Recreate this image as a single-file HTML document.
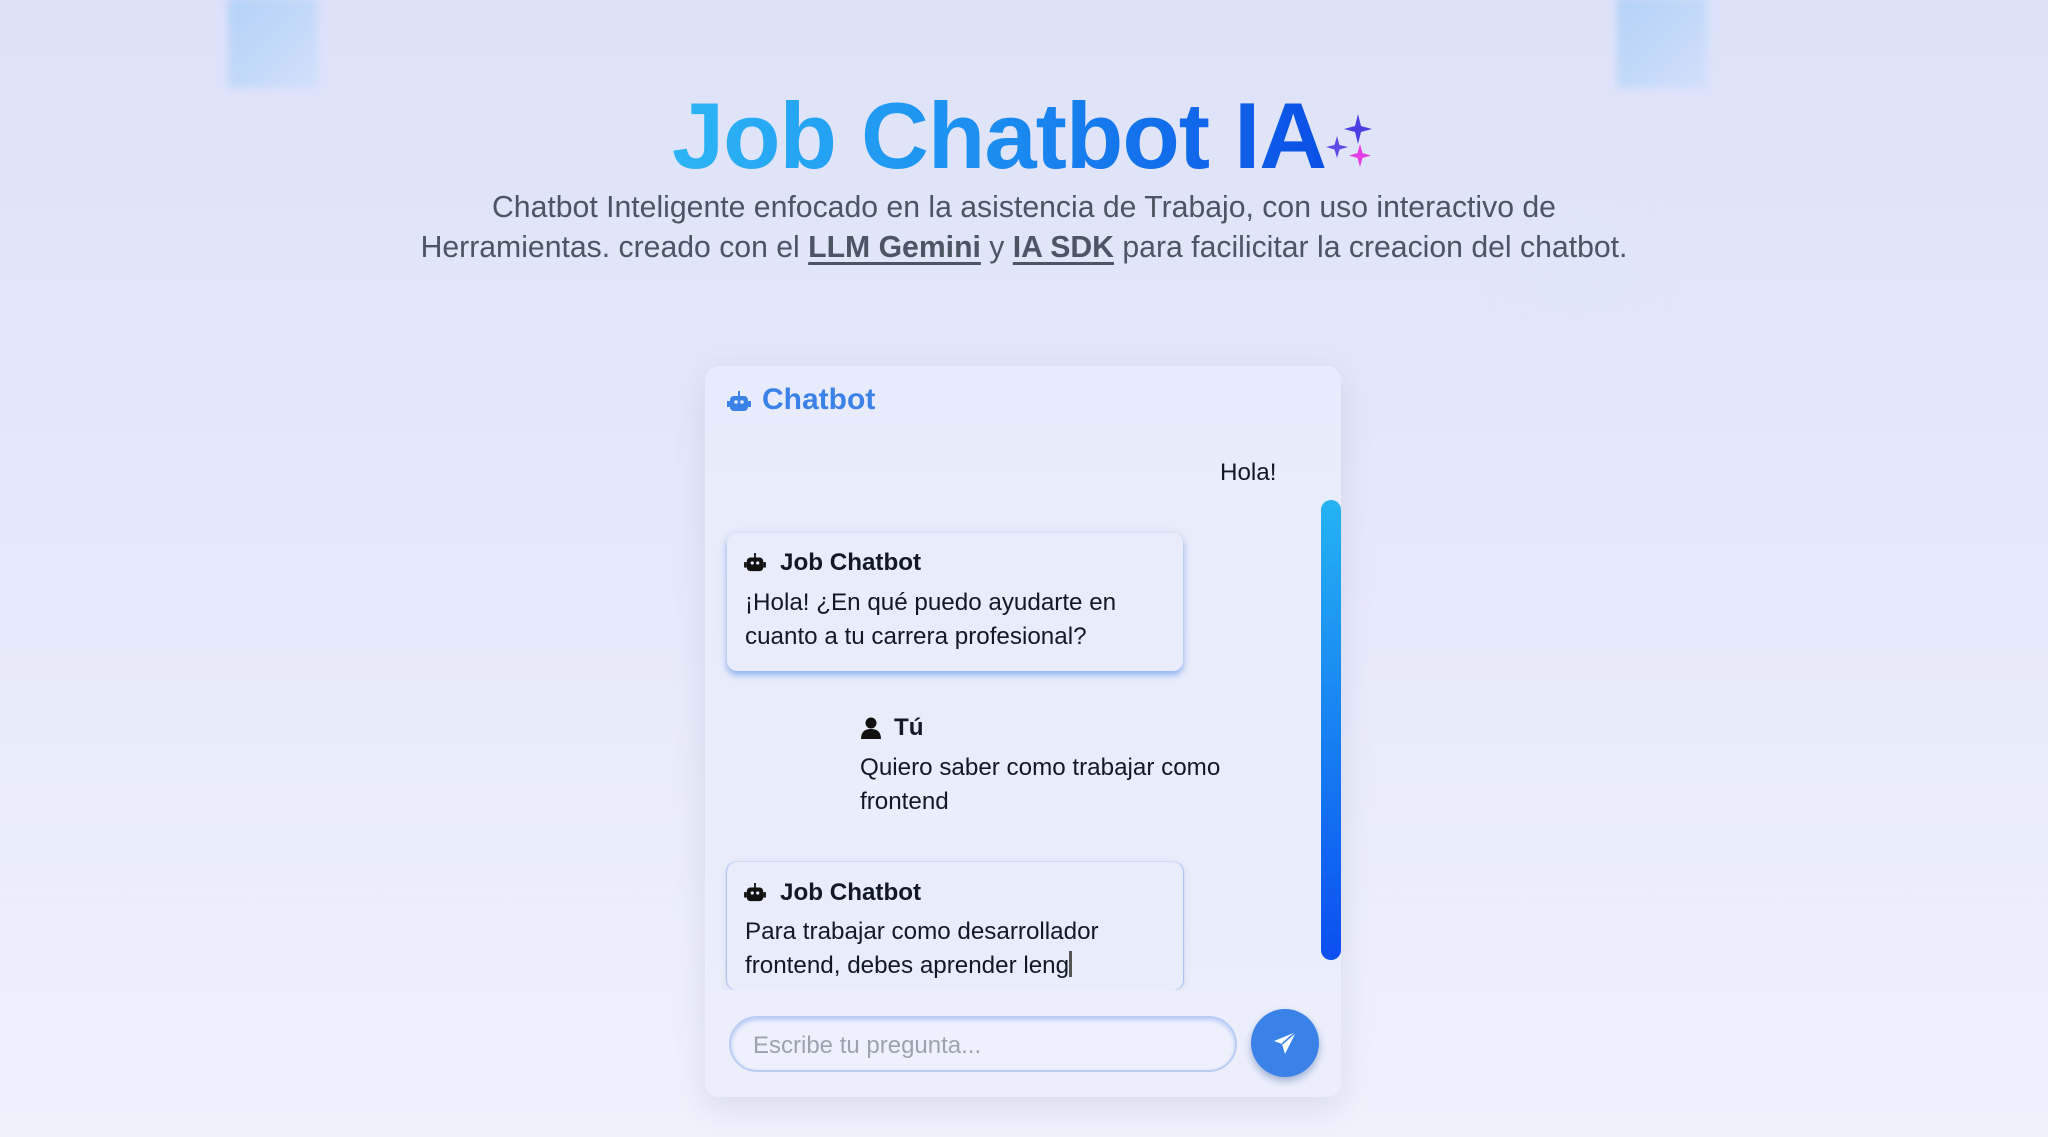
<!DOCTYPE html>
<html><head><meta charset="utf-8"><style>
*{margin:0;padding:0;box-sizing:border-box}
html,body{width:2048px;height:1137px;overflow:hidden}
body{font-family:"Liberation Sans",sans-serif;background:linear-gradient(180deg,#dde2f9 0%,#e6e9fa 50%,#eff1fb 100%);position:relative;color:#111827}
.sq{position:absolute;width:90px;height:90px;top:-2px;background:linear-gradient(135deg,#a9cdf7,#cfe0fb);filter:blur(4px);opacity:.8}
.blob{position:absolute;left:1520px;top:200px;width:120px;height:110px;border-radius:50%;background:#dfe5fa;filter:blur(20px);opacity:.7}
h1{position:absolute;left:0;width:2048px;top:82px;text-align:center;font-size:94px;font-weight:700;letter-spacing:-1px;line-height:1.15}
h1 span{background:linear-gradient(90deg,#2cb5f5 0%,#1a8cf0 50%,#0a4fe6 100%);-webkit-background-clip:text;background-clip:text;color:transparent}
.sub{position:absolute;left:0;width:2048px;top:188px;text-align:center;font-size:30.2px;line-height:40px;color:#4b5563}
.sub b{text-decoration:underline;text-underline-offset:5px}
.card{position:absolute;left:705px;top:366px;width:636px;height:731px;border-radius:14px;background:rgba(234,238,252,.6);box-shadow:0 10px 30px rgba(120,130,170,.18)}
.t{position:absolute;font-size:24.2px;line-height:34px;color:#111827}
.bub{position:absolute;left:727px;width:456px;background:#e8ecfb;border-radius:10px;box-shadow:0 4px 6px rgba(59,130,246,.45),0 2px 10px rgba(100,110,150,.15)}
.name{font-weight:700}
.sb{position:absolute;left:1321px;top:500px;width:20px;height:460px;border-radius:10px;background:linear-gradient(180deg,#24b3f3,#0b4ff0)}
.inp{position:absolute;left:729px;top:1016px;width:508px;height:56px;border-radius:28px;border:2px solid #b9cdf4;background:#eef1fc;box-shadow:inset 0 2px 4px rgba(80,130,240,.35);font-size:24px;color:#9ca3af;padding:14px 22px}
.btn{position:absolute;left:1251px;top:1009px;width:68px;height:68px;border-radius:50%;background:#3b82e8;box-shadow:0 4px 8px rgba(40,80,160,.4)}
</style></head><body>
<div class="sq" style="left:228px"></div><div class="sq" style="left:1617px"></div>
<div class="blob"></div>
<h1><span>Job Chatbot IA</span><svg width="52" height="60" viewBox="0 0 52 60" style="vertical-align:-4px;margin-left:-2px"><path d="M34 2 L37 14 L48 17 L37 20 L34 32 L31 20 L20 17 L31 14Z" fill="#4a3fe0"/><path d="M13 24 L15.5 33 L24 35 L15.5 37.5 L13 46 L10.5 37.5 L2 35 L10.5 33Z" fill="#5b4ae6"/><path d="M36 32 L38.5 41 L47 43.5 L38.5 46 L36 55 L33.5 46 L25 43.5 L33.5 41Z" fill="#e43fe6"/></svg></h1>
<div class="sub">Chatbot Inteligente enfocado en la asistencia de Trabajo, con uso interactivo de<br>Herramientas. creado con el <b>LLM Gemini</b> y <b>IA SDK</b> para facilicitar la creacion del chatbot.</div>
<div class="card"></div>
<svg style="position:absolute;left:727px;top:391px" width="24" height="22" viewBox="0 0 24 22"><rect x="3" y="5" width="18" height="15" rx="4" fill="#3b82e8"/><rect x="11" y="0" width="2" height="5" fill="#3b82e8"/><rect x="0" y="10" width="3" height="6" fill="#3b82e8"/><rect x="21" y="10" width="3" height="6" fill="#3b82e8"/><circle cx="9" cy="11" r="1.8" fill="#e6ebfb"/><circle cx="15" cy="11" r="1.8" fill="#e6ebfb"/></svg>
<div class="t" style="left:762px;top:383px;font-size:30px;font-weight:700;color:#3b82e8">Chatbot</div>
<div class="t" style="left:1220px;top:456px">Hola!</div>
<div class="sb"></div>
<div class="bub" style="top:533px;height:138px"></div>
<div class="bub" style="top:862px;height:128px;box-shadow:0 2px 10px rgba(100,110,150,.15),-1px 0 1px rgba(59,130,246,.4),1px 0 1px rgba(59,130,246,.4)"></div>
<div style="position:absolute;left:705px;top:990px;width:636px;height:107px;background:#eceffb;border-radius:0 0 14px 14px"></div>
<svg style="position:absolute;left:744px;top:553px" width="22" height="20" viewBox="0 0 24 22"><rect x="3" y="5" width="18" height="15" rx="4" fill="#111"/><rect x="11" y="0" width="2" height="5" fill="#111"/><rect x="0" y="10" width="3" height="6" fill="#111"/><rect x="21" y="10" width="3" height="6" fill="#111"/><circle cx="9" cy="11" r="1.8" fill="#e6ebfb"/><circle cx="15" cy="11" r="1.8" fill="#e6ebfb"/></svg>
<div class="t name" style="left:780px;top:546px">Job Chatbot</div>
<div class="t" style="left:745px;top:586px">¡Hola! ¿En qué puedo ayudarte en<br>cuanto a tu carrera profesional?</div>
<svg style="position:absolute;left:861px;top:717px" width="20" height="22" viewBox="0 0 20 22"><circle cx="10" cy="6" r="5.5" fill="#111"/><path d="M0 22 Q0 12 10 12 Q20 12 20 22Z" fill="#111"/></svg>
<div class="t name" style="left:894px;top:711px">Tú</div>
<div class="t" style="left:860px;top:751px">Quiero saber como trabajar como<br>frontend</div>
<svg style="position:absolute;left:744px;top:883px" width="22" height="20" viewBox="0 0 24 22"><rect x="3" y="5" width="18" height="15" rx="4" fill="#111"/><rect x="11" y="0" width="2" height="5" fill="#111"/><rect x="0" y="10" width="3" height="6" fill="#111"/><rect x="21" y="10" width="3" height="6" fill="#111"/><circle cx="9" cy="11" r="1.8" fill="#e6ebfb"/><circle cx="15" cy="11" r="1.8" fill="#e6ebfb"/></svg>
<div class="t name" style="left:780px;top:876px">Job Chatbot</div>
<div class="t" style="left:745px;top:915px">Para trabajar como desarrollador<br>frontend, debes aprender leng<span style="display:inline-block;width:3px;height:26px;background:#555;vertical-align:-4px"></span></div>
<div class="inp">Escribe tu pregunta...</div>
<div class="btn"><svg style="position:absolute;left:22px;top:22px" width="24" height="24" viewBox="0 0 24 24"><path d="M23 1 L1 10 L9 13 L12 23Z" fill="#fff"/><path d="M23 1 L9 13" stroke="#3b82e8" stroke-width="1.5"/></svg></div>
</body></html>
